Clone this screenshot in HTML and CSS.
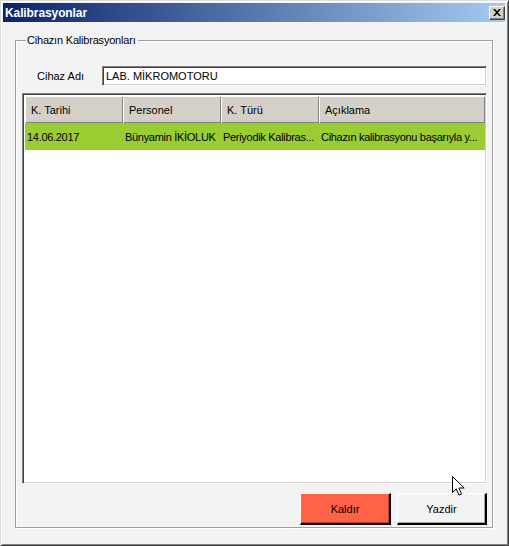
FILE: index.html
```html
<!doctype html>
<html lang="tr">
  <head>
    <meta charset="UTF-8" />
    <title>Kalibrasyonlar</title>
    <link rel="stylesheet" href="styles.css">
  </head>

  <body>
    <div class="window">
      <div class="titlebar">
        <span class="title">Kalibrasyonlar</span>
        <button type="button" class="close-btn">
          <svg width="8" height="7" viewBox="0 0 8 7">
            <path d="M0 0h2l2 2.2L6 0h2L5 3.5 8 7H6L4 4.8 2 7H0l3-3.5z" fill="#000" />
          </svg>
        </button>
      </div>

      <div class="client">
        <fieldset class="group">
          <legend>Cihazın Kalibrasyonları</legend>

          <div class="field-row">
            <label for="cihazAdi">Cihaz Adı</label>
            <input type="text" id="cihazAdi" value="LAB. MİKROMOTORU" />
          </div>

          <div class="listview">
            <table>
              <colgroup>
                <col class="col-date" />
                <col class="col-person" />
                <col class="col-type" />
                <col />
              </colgroup>
              <thead>
                <tr>
                  <th>K. Tarihi</th>
                  <th>Personel</th>
                  <th>K. Türü</th>
                  <th>Açıklama</th>
                </tr>
              </thead>
              <tbody>
                <tr class="selected">
                  <td>14.06.2017</td>
                  <td>Bünyamin İKİOLUK</td>
                  <td>Periyodik Kalibras...</td>
                  <td>Cihazın kalibrasyonu başarıyla y...</td>
                </tr>
              </tbody>
            </table>
          </div>

          <div class="actions">
            <button type="button" class="btn btn-remove">Kaldır</button>
            <button type="button" class="btn">Yazdir</button>
          </div>
        </fieldset>
      </div>

      <!-- mouse pointer -->
      <svg class="pointer" width="13" height="21" viewBox="0 0 13 21">
        <path d="M0.5 0.5v16l3.8-3.6 2.6 6.2 2.6-1.1-2.6-6h5.3z" fill="#fff" stroke="#000" stroke-width="1" stroke-linejoin="miter" />
      </svg>
    </div>
  </body>
</html>
```

FILE: styles.css
```css
* {
  margin: 0;
  padding: 0;
  box-sizing: border-box;
}

body {
  background-color: #f3f3f3;
  font-family: 'Liberation Sans', Arial, sans-serif;
  font-size: 11px;
  color: #000;
}

.window {
  position: relative;
  width: 509px;
  height: 546px;
  background-color: #f3f3f3;
  border-top: 1px solid #dcdcdc;
  border-left: 1px solid #dcdcdc;
  border-right: 1px solid #404040;
  border-bottom: 1px solid #404040;
  box-shadow: inset 1px 1px #fff, inset -1px -1px #808080;
  padding: 2px 3px 3px 2px;
  display: flex;
  flex-direction: column;
}

.titlebar {
  height: 19px;
  display: flex;
  align-items: center;
  justify-content: space-between;
  padding: 0 0 0 2px;
  background: linear-gradient(to right, #0a246a, #a6caf0);
}

.title {
  color: #fff;
  font-weight: 700;
  font-size: 12px;
  letter-spacing: -0.1px;
}

.close-btn {
  width: 16px;
  height: 14px;
  background-color: #d4d0c8;
  border-top: 1px solid #fff;
  border-left: 1px solid #fff;
  border-right: 1px solid #404040;
  border-bottom: 1px solid #404040;
  box-shadow: inset -1px -1px #808080;
  display: flex;
  align-items: center;
  justify-content: center;
}

.client {
  flex: 1;
  padding: 12px 0 0 12px;
}

.group {
  width: 478px;
  height: 494px;
  border: 1px solid #a0a0a0;
  box-shadow: inset 1px 1px #fff, 1px 1px #fff;
  padding: 0 5px 0 6px;
  display: flex;
  flex-direction: column;
}

.group legend {
  margin-left: 4px;
  padding: 0 2px 0 1px;
  line-height: 13px;
  color: #000;
  letter-spacing: -0.2px;
}

.field-row {
  display: flex;
  align-items: center;
  margin-top: 19px;
  height: 20px;
}

.field-row label {
  width: 80px;
  padding-left: 15px;
}

.field-row input {
  width: 385px;
  height: 20px;
  padding: 0 3px;
  font: inherit;
  color: #000;
  background-color: #fff;
  border-top: 1px solid #808080;
  border-left: 1px solid #808080;
  border-right: 1px solid #fff;
  border-bottom: 1px solid #fff;
  box-shadow: inset 1px 1px #404040, inset -1px -1px #d4d0c8;
  outline: none;
}

.listview {
  margin-top: 7px;
  width: 465px;
  height: 391px;
  background-color: #fff;
  border-top: 1px solid #808080;
  border-left: 1px solid #808080;
  border-right: 1px solid #fff;
  border-bottom: 1px solid #fff;
  box-shadow: inset 1px 1px #404040, inset -1px -1px #d4d0c8;
  padding: 2px 1px 1px 2px;
  overflow: hidden;
}

.listview table {
  width: 100%;
  border-collapse: collapse;
  table-layout: fixed;
}

.col-date {
  width: 98px;
}

.col-person {
  width: 98px;
}

.col-type {
  width: 98px;
}

.listview tr {
  height: 27px;
}

.listview th {
  padding: 0 6px;
  text-align: left;
  font-weight: 400;
  background-color: #d4d0c8;
  box-shadow: inset 1px 1px #fff, inset -1px -1px #808080;
  white-space: nowrap;
}

.listview td {
  padding: 0 2px;
  white-space: nowrap;
  overflow: hidden;
  letter-spacing: -0.3px;
}

.listview tr.selected td {
  background-color: #9acd32;
}

.actions {
  display: flex;
  justify-content: flex-end;
  gap: 6px;
  margin-top: 9px;
}

.btn {
  width: 90px;
  height: 32px;
  font: inherit;
  color: #000;
  background-color: #f3f3f3;
  border-top: 1px solid #fff;
  border-left: 1px solid #fff;
  border-right: 2px solid #000;
  border-bottom: 2px solid #000;
  box-shadow: inset -1px -1px #a0a0a0;
  cursor: pointer;
}

.btn-remove {
  width: 91px;
  background-color: #ff6347;
  box-shadow: inset -1px -1px #c04030;
}

.pointer {
  position: absolute;
  left: 451px;
  top: 475px;
}
```
